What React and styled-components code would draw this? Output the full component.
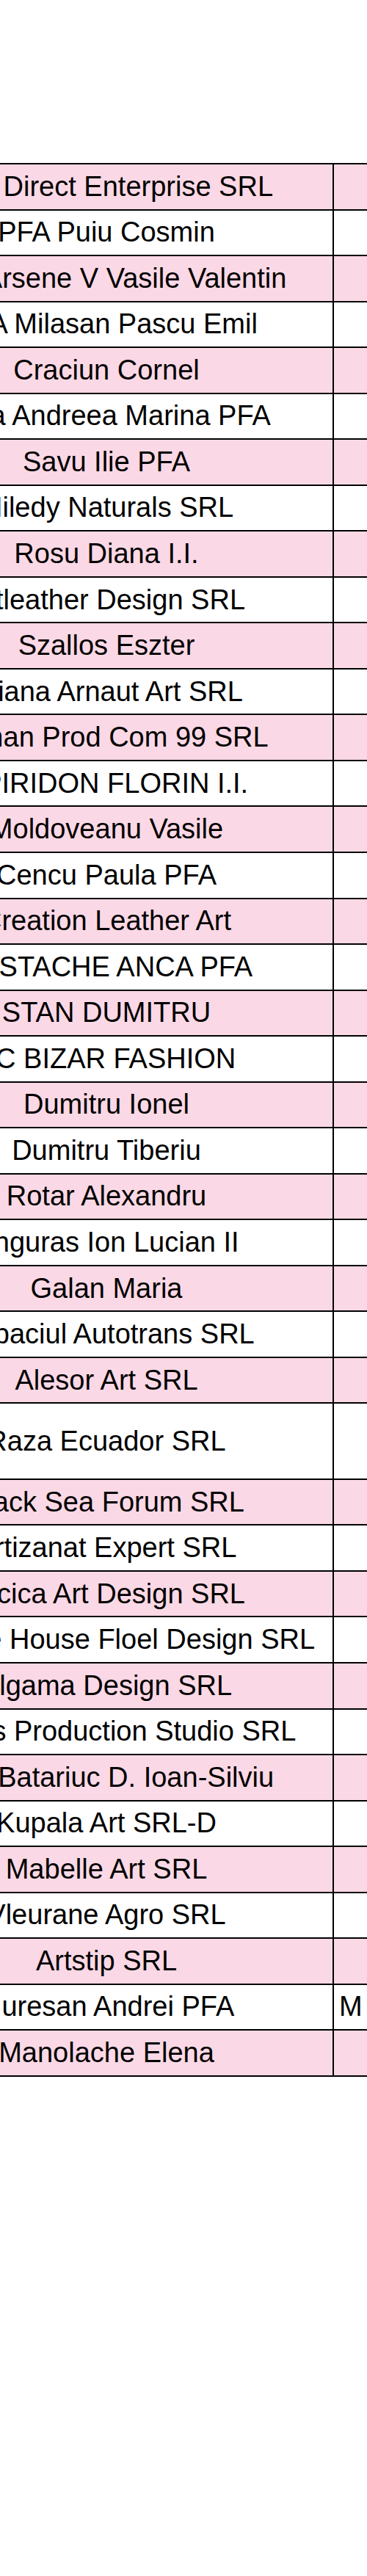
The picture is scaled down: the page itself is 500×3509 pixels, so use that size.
import React from "react";
import styled, { createGlobalStyle } from "styled-components";

const GlobalStyle = createGlobalStyle`
  html, body {
    margin: 0;
    padding: 0;
    background: #ffffff;
    overflow-x: hidden;
  }
`;

const Page = styled.main`
  width: 100%;
  overflow: hidden;
  padding-top: 222px;
  background: #ffffff;
`;

const Table = styled.div`
  display: flex;
  flex-direction: column;
  width: 920px;
  margin-left: -165px;
  border-top: 2px solid #000;
  border-left: 2px solid #000;
  font-family: "Liberation Sans", Arial, sans-serif;
  font-size: 38px;
  color: #000;
`;

const Row = styled.div`
  display: flex;
  height: ${(p) => (p.$tall ? 103.5 : 62.54)}px;
  background: ${(p) => (p.$shaded ? "#fbd8e5" : "#ffffff")};
`;

const NameCell = styled.div`
  box-sizing: border-box;
  flex: 0 0 618px;
  display: flex;
  align-items: center;
  justify-content: center;
  white-space: nowrap;
  border-right: 2px solid #000;
  border-bottom: 2px solid #000;
`;

const RegionCell = styled.div`
  box-sizing: border-box;
  flex: 0 0 300px;
  display: flex;
  align-items: center;
  padding-left: 7px;
  white-space: nowrap;
  border-right: 2px solid #000;
  border-bottom: 2px solid #000;
`;

const rows = [
  { name: "Best Direct Enterprise SRL" },
  { name: "PFA Puiu Cosmin" },
  { name: "PFA Arsene V Vasile Valentin" },
  { name: "PFA Milasan Pascu Emil" },
  { name: "Craciun Cornel" },
  { name: "Sima Andreea Marina PFA" },
  { name: "Savu Ilie PFA" },
  { name: "Miledy Naturals SRL" },
  { name: "Rosu Diana I.I." },
  { name: "Artleather Design SRL" },
  { name: "Szallos Eszter" },
  { name: "Liliana Arnaut Art SRL" },
  { name: "Roman Prod Com 99 SRL" },
  { name: "SPIRIDON FLORIN I.I." },
  { name: "Moldoveanu Vasile" },
  { name: "Cencu Paula PFA" },
  { name: "Creation Leather Art" },
  { name: "EUSTACHE ANCA PFA" },
  { name: "STAN DUMITRU" },
  { name: "SC BIZAR FASHION" },
  { name: "Dumitru Ionel" },
  { name: "Dumitru Tiberiu" },
  { name: "Rotar Alexandru" },
  { name: "Unguras Ion Lucian II" },
  { name: "Galan Maria" },
  { name: "Copaciul Autotrans SRL" },
  { name: "Alesor Art SRL" },
  { name: "Raza Ecuador SRL", tall: true },
  { name: "Black Sea Forum SRL" },
  { name: "Artizanat Expert SRL" },
  { name: "Micica Art Design SRL" },
  { name: "Creative House Floel Design SRL" },
  { name: "Algama Design SRL" },
  { name: "Visions Production Studio SRL" },
  { name: "PFA Batariuc D. Ioan-Silviu" },
  { name: "Kupala Art SRL-D" },
  { name: "Mabelle Art SRL" },
  { name: "Vleurane Agro SRL" },
  { name: "Artstip SRL" },
  { name: "Muresan Andrei PFA", region: "M" },
  { name: "Manolache Elena" },
];

export default function App() {
  return (
    <>
      <GlobalStyle />
      <Page>
        <Table>
          {rows.map((r, i) => (
            <Row key={r.name} $shaded={i % 2 === 0} $tall={r.tall}>
              <NameCell>{r.name}</NameCell>
              <RegionCell>{r.region || ""}</RegionCell>
            </Row>
          ))}
        </Table>
      </Page>
    </>
  );
}
